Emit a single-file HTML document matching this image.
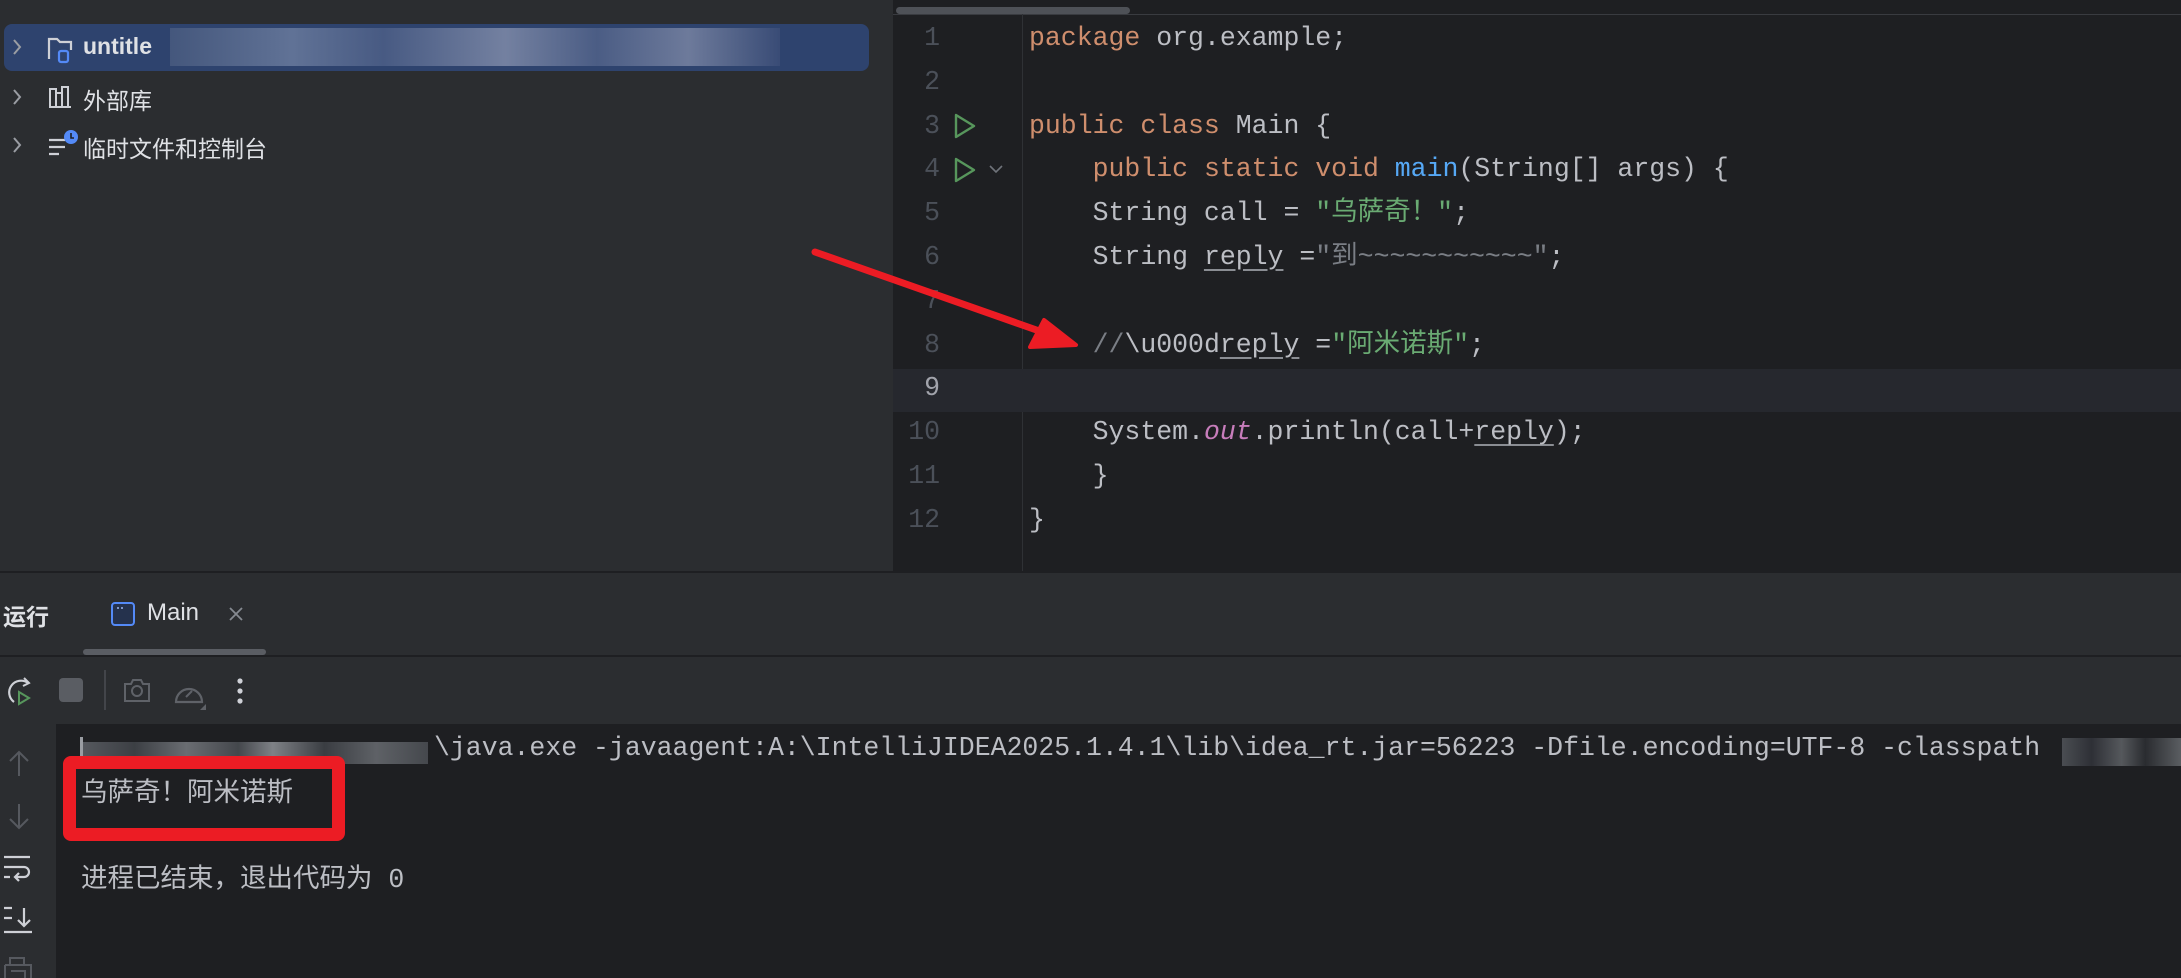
<!DOCTYPE html>
<html><head><meta charset="utf-8"><style>
*{margin:0;padding:0;box-sizing:border-box}
body{width:2181px;height:978px;background:#2b2d30;position:relative;overflow:hidden;font-family:"Liberation Sans","Noto Sans CJK SC",sans-serif;color:#dfe1e5}
.a{position:absolute}
.mono{font-family:"Liberation Mono","Noto Sans CJK SC",monospace;font-size:26.5px}
.mono div,.pre{white-space:pre}
.code div{height:43.8px;line-height:43.8px}
.k{color:#cf8e6d}.s{color:#6aab73}.m{color:#56a8f5}.t{color:#bcbec4}.c{color:#7a7e85}.o{color:#c77dbb;font-style:italic}
.u{text-decoration:underline;text-decoration-color:#8a8d93;text-underline-offset:5px}
.ln div{height:43.8px;line-height:43.8px;text-align:right;color:#4b5059}
.tree{font-size:23px;color:#dfe1e5}
</style></head><body>
<!-- project panel -->
<div class="a" style="left:4px;top:24px;width:865px;height:47px;background:#2e436e;border-radius:8px"></div>
<svg class="a" style="left:10px;top:36px" width="14" height="22"><path d="M4 4l6 7-6 7" stroke="#9a9da3" stroke-width="2" fill="none"/></svg>
<svg class="a" style="left:10px;top:86px" width="14" height="22"><path d="M4 4l6 7-6 7" stroke="#9a9da3" stroke-width="2" fill="none"/></svg>
<svg class="a" style="left:10px;top:134px" width="14" height="22"><path d="M4 4l6 7-6 7" stroke="#9a9da3" stroke-width="2" fill="none"/></svg>
<svg class="a" style="left:46px;top:34px" width="30" height="30"><path d="M3 25V5h8l3 3h11v8" stroke="#ced0d6" stroke-width="2.2" fill="none"/><rect x="13" y="17" width="9" height="11" rx="2" stroke="#548af7" stroke-width="2.2" fill="none"/></svg>
<div class="a tree" style="left:83px;top:33px;font-weight:bold">untitle</div>
<div class="a" style="left:170px;top:28px;width:610px;height:38px;background:linear-gradient(90deg,#4a5c80,#6d7ea0 20%,#4e6088 35%,#8590ad 55%,#52638a 70%,#7d88a6 85%,#3c4e78);opacity:.8"></div>
<svg class="a" style="left:47px;top:83px" width="28" height="28"><path d="M3 24V6h6v18M9 24V10h6v14M15 24V4h6v20M2 24h22" stroke="#ced0d6" stroke-width="2" fill="none"/></svg>
<div class="a tree" style="left:83px;top:82px">外部库</div>
<svg class="a" style="left:47px;top:128px" width="34" height="32"><path d="M2 12h16M2 19h16M2 26h10" stroke="#ced0d6" stroke-width="2.2"/><circle cx="24" cy="9" r="7" fill="#548af7"/><path d="M24 5v5h3" stroke="#1e1f22" stroke-width="1.6" fill="none"/></svg>
<div class="a tree" style="left:83px;top:130px">临时文件和控制台</div>

<!-- editor -->
<div class="a" style="left:893px;top:0;width:1288px;height:571px;background:#1e1f22"></div>
<div class="a" style="left:893px;top:14px;width:1288px;height:1px;background:#393b40"></div>
<div class="a" style="left:896px;top:7px;width:234px;height:7px;background:#4e5157;border-radius:4px"></div>
<div class="a" style="left:1022px;top:14px;width:1px;height:557px;background:#2f3135"></div>
<div class="a" style="left:893px;top:369px;width:1288px;height:43px;background:#26282e"></div>
<div class="a mono ln" style="left:893px;top:17px;width:47px"><div>1</div><div>2</div><div>3</div><div>4</div><div>5</div><div>6</div><div>7</div><div>8</div><div style="color:#a1a3ab">9</div><div>10</div><div>11</div><div>12</div></div>
<svg class="a" style="left:952px;top:112px" width="26" height="28"><path d="M4 3l18 11L4 25z" stroke="#57965c" stroke-width="2.4" fill="none" stroke-linejoin="round"/></svg>
<svg class="a" style="left:952px;top:156px" width="26" height="28"><path d="M4 3l18 11L4 25z" stroke="#57965c" stroke-width="2.4" fill="none" stroke-linejoin="round"/></svg>
<svg class="a" style="left:988px;top:163px" width="16" height="12"><path d="M2 3l6 6 6-6" stroke="#6f737a" stroke-width="1.6" fill="none"/></svg>
<div class="a mono code t" style="left:1029px;top:17px"><div><span class="k">package</span> org.example;</div><div> </div><div><span class="k">public class</span> Main {</div><div>    <span class="k">public static void</span> <span class="m">main</span>(String[] args) {</div><div>    String call = <span class="s">"乌萨奇！"</span>;</div><div>    String <span class="u">reply</span> =<span class="c">"到~~~~~~~~~~~"</span>;</div><div> </div><div>    <span class="c">//</span>\u000d<span class="u">reply</span> =<span class="s">"阿米诺斯"</span>;</div><div> </div><div>    System.<span class="o">out</span>.println(call+<span class="u">reply</span>);</div><div>    }</div><div>}</div></div>

<!-- bottom tool window -->
<div class="a" style="left:0;top:571px;width:2181px;height:2px;background:#1e1f22"></div>
<div class="a" style="left:3px;top:598px;font-size:23px;font-weight:bold">运行</div>
<svg class="a" style="left:110px;top:601px" width="26" height="26"><rect x="2" y="2" width="22" height="22" rx="3" stroke="#548af7" stroke-width="2" fill="#25324d"/><path d="M7 7h2M11 7h2" stroke="#9bb6f0" stroke-width="1.5"/></svg>
<div class="a" style="left:147px;top:599px;font-size:24px">Main</div>
<svg class="a" style="left:227px;top:605px" width="18" height="18"><path d="M3 3l12 12M15 3L3 15" stroke="#868a91" stroke-width="1.8"/></svg>
<div class="a" style="left:83px;top:649px;width:183px;height:6px;background:#5a5d63;border-radius:3px"></div>
<div class="a" style="left:0;top:655px;width:2181px;height:2px;background:#1e1f22"></div>
<svg class="a" style="left:4px;top:675px" width="34" height="34"><path d="M24 8A11 11 0 1 0 10 27" stroke="#ced0d6" stroke-width="2.2" fill="none"/><path d="M20 3l5 5-6 3" stroke="#ced0d6" stroke-width="2" fill="none"/><path d="M15 17l10 6-10 6z" stroke="#57965c" stroke-width="2" fill="none"/></svg>
<div class="a" style="left:59px;top:678px;width:24px;height:24px;background:#5a5d63;border-radius:4px"></div>
<div class="a" style="left:104px;top:670px;width:2px;height:40px;background:#43454a"></div>
<svg class="a" style="left:122px;top:676px" width="30" height="28"><path d="M3 8h6l2-4h8l2 4h6v17H3z" stroke="#5f6268" stroke-width="2" fill="none"/><circle cx="15" cy="15" r="5" stroke="#5f6268" stroke-width="2" fill="none"/></svg>
<svg class="a" style="left:172px;top:676px" width="36" height="34"><path d="M4 26A13 13 0 1 1 30 26z" stroke="#5f6268" stroke-width="2.2" fill="none"/><path d="M14 21l6-6" stroke="#5f6268" stroke-width="2"/><path d="M28 34l6-6v6z" fill="#5f6268"/></svg>
<svg class="a" style="left:234px;top:676px" width="12" height="30"><circle cx="6" cy="5" r="2.6" fill="#ced0d6"/><circle cx="6" cy="15" r="2.6" fill="#ced0d6"/><circle cx="6" cy="25" r="2.6" fill="#ced0d6"/></svg>

<div class="a" style="left:56px;top:724px;width:2125px;height:254px;background:#1e1f22"></div>
<svg class="a" style="left:6px;top:748px" width="26" height="32"><path d="M13 28V4M4 13l9-9 9 9" stroke="#56595f" stroke-width="2" fill="none"/></svg>
<svg class="a" style="left:6px;top:800px" width="26" height="32"><path d="M13 4v24M4 19l9 9 9-9" stroke="#56595f" stroke-width="2" fill="none"/></svg>
<svg class="a" style="left:2px;top:852px" width="32" height="32"><path d="M2 5h26M2 15h20a5 5 0 0 1 0 10h-9M2 25h6M17 21l-4 4 4 4" stroke="#ced0d6" stroke-width="2.2" fill="none"/></svg>
<svg class="a" style="left:2px;top:904px" width="32" height="32"><path d="M2 4h8M2 14h8M2 28h28M22 4v18M16 16l6 6 6-6" stroke="#ced0d6" stroke-width="2.2" fill="none"/></svg>
<svg class="a" style="left:2px;top:955px" width="32" height="23"><path d="M8 10V3h14v7M3 10h26v13M3 23V10M9 16h14v7" stroke="#56595f" stroke-width="2" fill="none"/></svg>

<div class="a" style="left:80px;top:737px;width:3px;height:28px;background:#9a9da3"></div>
<div class="a" style="left:83px;top:742px;width:345px;height:22px;background:linear-gradient(90deg,#55585e,#3c3f44 15%,#6a6d72 30%,#44474c 45%,#7e8186 55%,#3a3d42 70%,#5e6166 85%,#45484d)"></div>
<div class="a mono t pre" style="left:434px;top:730px;line-height:36px">\java.exe -javaagent:A:\IntelliJIDEA2025.1.4.1\lib\idea_rt.jar=56223 -Dfile.encoding=UTF-8 -classpath</div>
<div class="a" style="left:2062px;top:738px;width:119px;height:28px;background:linear-gradient(90deg,#4a4d52,#2e3036 25%,#55585c 50%,#2a2c30 70%,#5a5d61)"></div>
<div class="a mono t pre" style="left:81px;top:776px;line-height:36px">乌萨奇！阿米诺斯</div>
<div class="a mono t pre" style="left:81px;top:862px;line-height:36px">进程已结束，退出代码为 0</div>

<!-- red annotations -->
<div class="a" style="left:63px;top:756px;width:282px;height:85px;border:13px solid #ec1c24;border-radius:8px"></div>
<svg class="a" style="left:0;top:0" width="2181" height="978"><line x1="815" y1="252" x2="1045" y2="333" stroke="#ec1c24" stroke-width="7" stroke-linecap="round"/><path d="M1076 345L1030 347L1044 320Z" fill="#ec1c24" stroke="#ec1c24" stroke-width="4" stroke-linejoin="round"/></svg>
</body></html>
